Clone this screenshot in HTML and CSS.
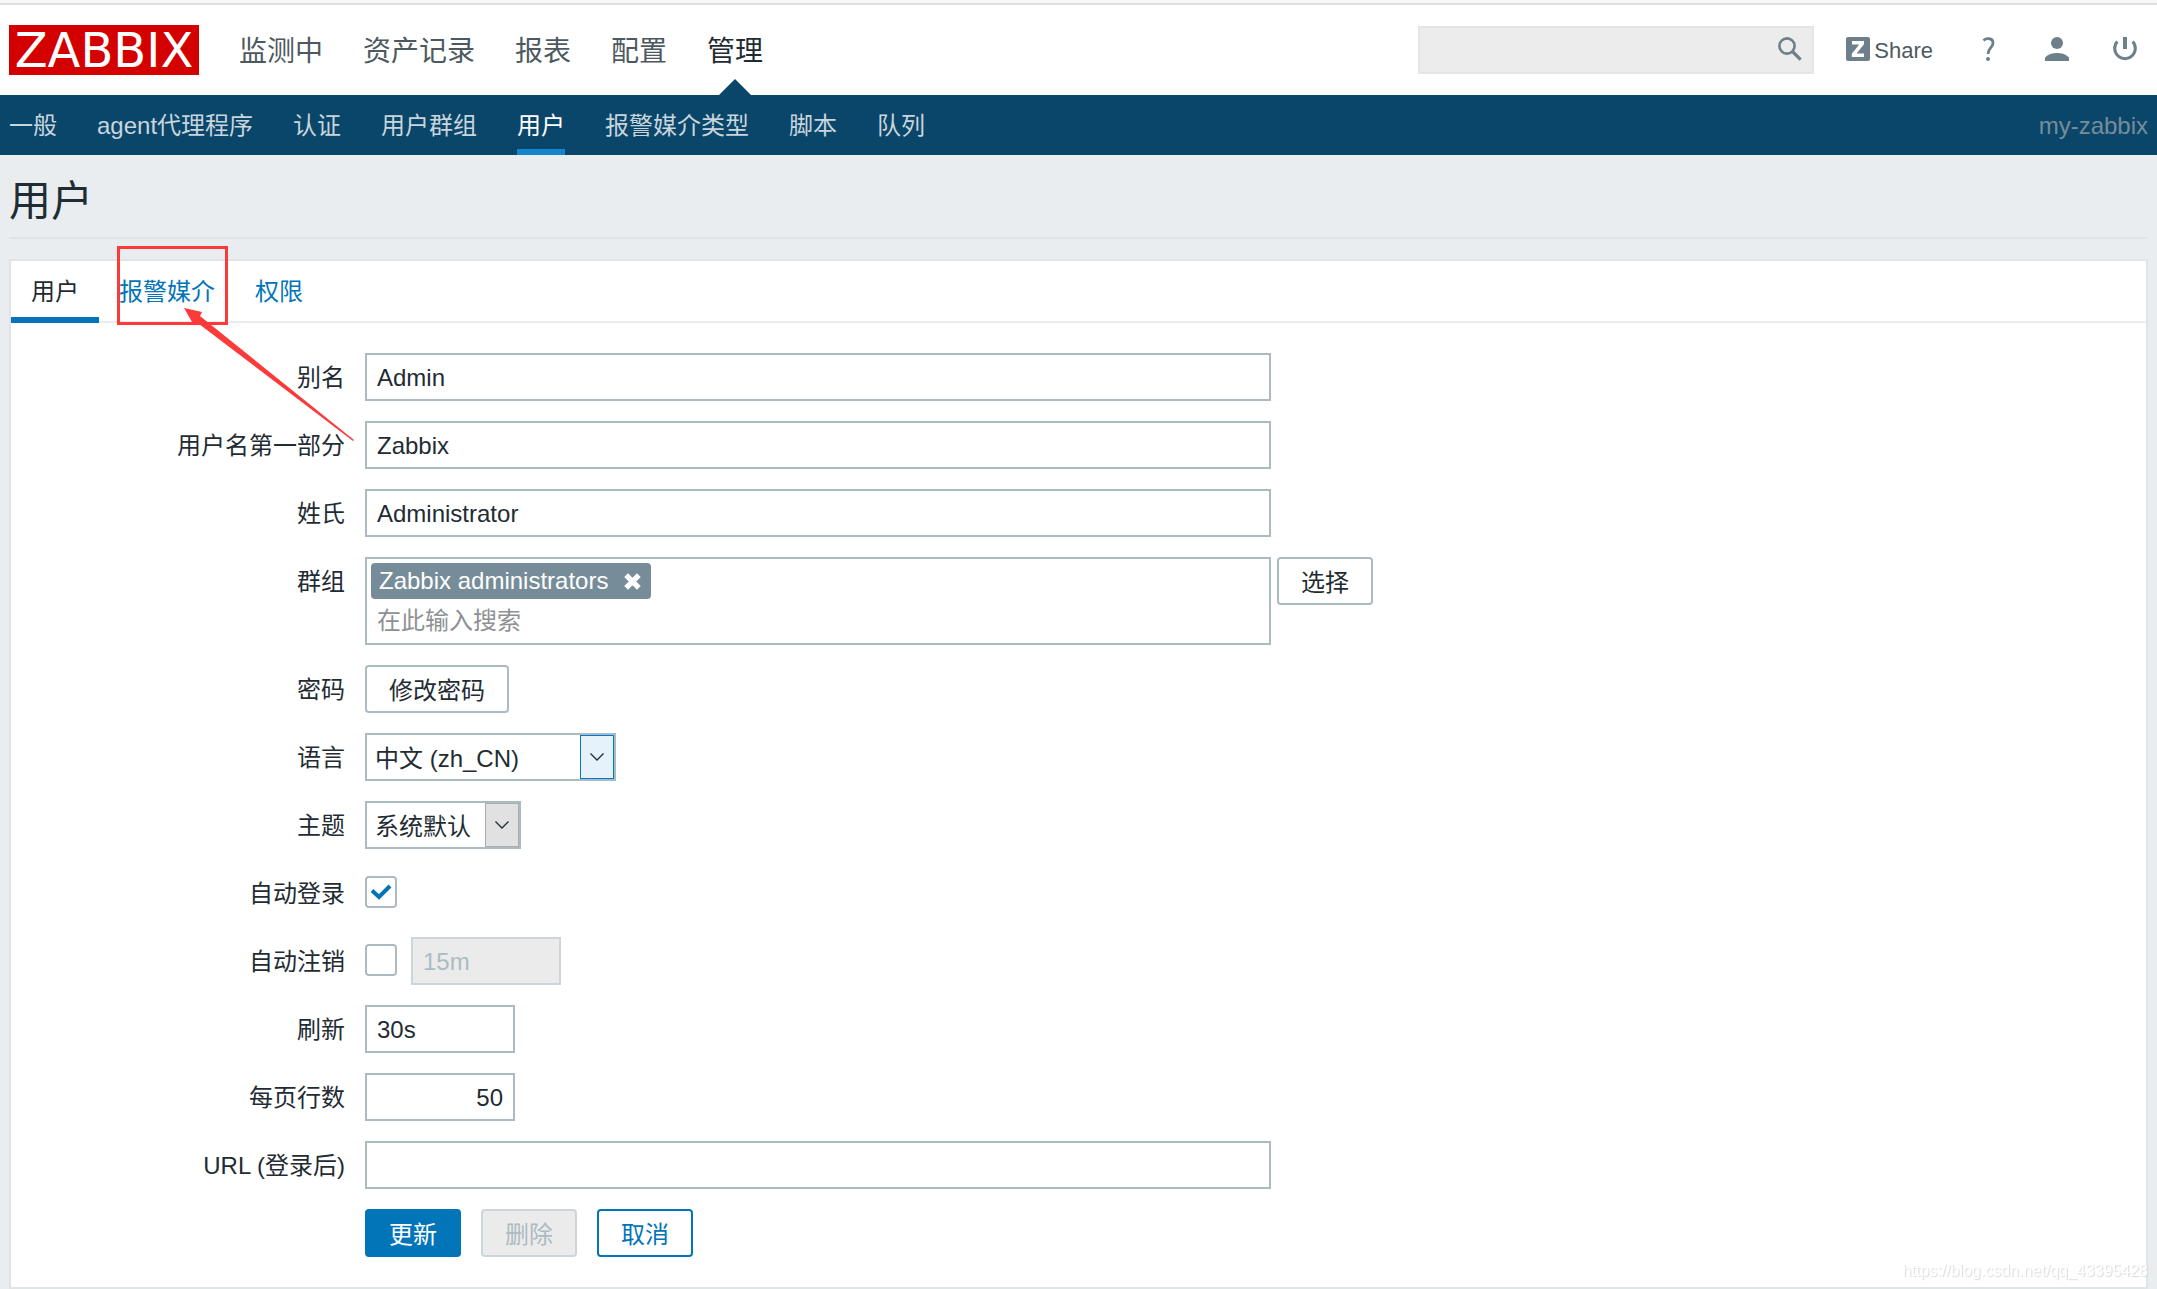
FILE: index.html
```html
<!DOCTYPE html>
<html lang="zh-CN">
<head>
<meta charset="utf-8">
<meta name="viewport" content="width=device-width, initial-scale=1">
<title>用户</title>
<link rel="stylesheet" href="styles.css">
</head>
<body>
<header class="header">
  <a class="logo" href="#">ZABBIX</a>
  <nav class="main-nav" aria-label="主菜单">
    <a href="#">监测中</a>
    <a href="#">资产记录</a>
    <a href="#">报表</a>
    <a href="#">配置</a>
    <a class="current" href="#">管理</a>
  </nav>
  <form class="search" role="search">
    <input class="search-input" type="text" aria-label="搜索">
    <button class="search-button" type="button" aria-label="搜索">
      <svg class="icon" viewBox="0 0 24 24" aria-hidden="true"><circle cx="9" cy="9" r="7.6" fill="none" stroke="currentColor" stroke-width="2.6"/><path d="M14.5 14.5 22.6 22.6" stroke="currentColor" stroke-width="3.2"/></svg>
    </button>
  </form>
  <div class="tools">
    <a class="share" href="#">
      <svg class="icon" viewBox="0 0 24 24" aria-hidden="true"><rect width="24" height="24" rx="2" fill="currentColor"/><path d="M6 4h12v3.2L10.600 16.500H18V20H5.800v-3.200L13.200 7.500H6z" fill="#fff"/></svg>
      <span>Share</span>
    </a>
    <a class="tool" href="#" aria-label="帮助"><svg class="icon" viewBox="0 0 24 24" aria-hidden="true"><path d="M6.500 3.500C8.500 1.400 16 .1 16 6c0 4.500-5 5-5 11" fill="none" stroke="currentColor" stroke-width="2.800"/><circle cx="11" cy="22" r="2" fill="currentColor"/></svg></a>
    <a class="tool" href="#" aria-label="用户资料"><svg class="icon" viewBox="0 0 24 24" aria-hidden="true" fill="currentColor"><circle cx="12" cy="6" r="6"/><path d="M0 24v-3.500C3 17.300 7 16 12 16s9 1.300 12 4.500V24z"/></svg></a>
    <a class="tool" href="#" aria-label="退出"><svg class="icon" viewBox="0 0 24 24" aria-hidden="true" fill="none" stroke="currentColor"><path d="M4.300 4.500A10.300 10.300 0 1 0 19.700 4.500" stroke-width="3"/><path d="M12 0v12" stroke-width="4"/></svg></a>
  </div>
</header>
<nav class="sub-nav" aria-label="子菜单">
  <a href="#">一般</a>
  <a href="#">agent代理程序</a>
  <a href="#">认证</a>
  <a href="#">用户群组</a>
  <a class="current" href="#">用户</a>
  <a href="#">报警媒介类型</a>
  <a href="#">脚本</a>
  <a href="#">队列</a>
  <span class="server-name">my-zabbix</span>
</nav>
<main class="content">
  <h1 class="title">用户</h1>
  <section class="card">
    <nav class="tabs" aria-label="标签">
      <a class="current" href="#">用户</a>
      <a class="marked" href="#">报警媒介</a>
      <a href="#">权限</a>
      <svg class="arrow" viewBox="0 0 170 134" aria-hidden="true"><path d="M0 0 18 4 16 8 170 132 169 133 15 16 8 14z" fill="#fc3a3a"/></svg>
    </nav>
    <form class="form">
      <label for="alias">别名</label>
      <div class="field"><input class="text wide" id="alias" type="text" value="Admin"></div>
      <label for="name">用户名第一部分</label>
      <div class="field"><input class="text wide" id="name" type="text" value="Zabbix"></div>
      <label for="surname">姓氏</label>
      <div class="field"><input class="text wide" id="surname" type="text" value="Administrator"></div>
      <label for="groups">群组</label>
      <div class="field close">
        <div class="multiselect wide">
          <span class="tag">Zabbix administrators
            <button class="tag-remove" type="button" aria-label="移除"><svg viewBox="0 0 16 16" aria-hidden="true"><path d="M2 2 14 14M14 2 2 14" stroke="currentColor" stroke-width="5"/></svg></button>
          </span>
          <input class="multiselect-input" id="groups" type="text" placeholder="在此输入搜索">
        </div>
        <button class="button" type="button">选择</button>
      </div>
      <label for="password">密码</label>
      <div class="field"><button class="button" id="password" type="button">修改密码</button></div>
      <label for="lang">语言</label>
      <div class="field">
        <span class="select language">
          <select id="lang"><option>中文 (zh_CN)</option></select>
          <span class="select-arrow"><svg viewBox="0 0 14 8" aria-hidden="true"><path d="M.5.5 7 7 13.500.5" fill="none" stroke="currentColor" stroke-width="1.300"/></svg></span>
        </span>
      </div>
      <label for="theme">主题</label>
      <div class="field">
        <span class="select theme">
          <select id="theme"><option>系统默认</option></select>
          <span class="select-arrow"><svg viewBox="0 0 14 8" aria-hidden="true"><path d="M.5.5 7 7 13.500.5" fill="none" stroke="currentColor" stroke-width="1.300"/></svg></span>
        </span>
      </div>
      <label for="autologin">自动登录</label>
      <div class="field">
        <span class="check"><input id="autologin" type="checkbox" checked><svg viewBox="0 0 22 16" aria-hidden="true"><path d="M2 6.500 9 13 20 2" fill="none" stroke="currentColor" stroke-width="4"/></svg></span>
      </div>
      <label for="autologout">自动注销</label>
      <div class="field">
        <span class="check"><input id="autologout" type="checkbox"></span>
        <input class="text short" type="text" value="15m" aria-label="自动注销时间" disabled>
      </div>
      <label for="refresh">刷新</label>
      <div class="field"><input class="text short" id="refresh" type="text" value="30s"></div>
      <label for="rows">每页行数</label>
      <div class="field"><input class="text short number" id="rows" type="text" value="50"></div>
      <label for="url">URL (登录后)</label>
      <div class="field"><input class="text wide" id="url" type="text"></div>
      <div class="field actions">
        <button class="button primary" type="button">更新</button>
        <button class="button" type="button" disabled>删除</button>
        <button class="button outline" type="button">取消</button>
      </div>
    </form>
  </section>
</main>
<div class="watermark">https://blog.csdn.net/qq_43395428</div>
</body>
</html>
```
FILE: styles.css
```css
*, *::before, *::after {
  box-sizing: border-box;
}

body {
  margin: 0;
  background: #e9edf0;
  color: #1f2c33;
  font-family: "Liberation Sans", "Noto Sans CJK SC", sans-serif;
  font-size: 24px;
  line-height: 36px;
}

a {
  text-decoration: none;
  white-space: nowrap;
}

input, select, button {
  margin: 0;
  font: inherit;
  color: inherit;
}

.header {
  display: flex;
  align-items: center;
  height: 95px;
  padding: 5px 20px 0 9px;
  background: linear-gradient(#f7f7f7 3px, #dedede 3px, #dedede 5px, #fff 5px);
}

.logo {
  width: 190px;
  height: 50px;
  background: #d40000;
  color: #fff;
  font-family: "DejaVu Sans", sans-serif;
  font-size: 48px;
  line-height: 50px;
  text-align: center;
}

.main-nav {
  display: flex;
  gap: 40px;
  margin: 0 auto 0 40px;
  font-size: 28px;
}

.main-nav a {
  position: relative;
  height: 90px;
  color: #4d5961;
  line-height: 94px;
}

.main-nav .current {
  color: #1f2c33;
}

.main-nav .current::after {
  content: "";
  position: absolute;
  bottom: 0;
  left: 50%;
  margin-left: -16px;
  border: solid transparent;
  border-width: 0 16px 16px;
  border-bottom-color: #0a466a;
}

.search {
  display: flex;
  width: 396px;
  height: 48px;
  border: 2px solid #e5e5e5;
  background: #ececec;
}

.search-input {
  flex: 1;
  min-width: 0;
  padding: 0 10px;
  border: 0;
  background: none;
  outline: 0;
}

.search-button {
  padding: 9px 10px 11px;
  border: 0;
  background: none;
  color: #6c7f8a;
}

.icon {
  display: block;
  width: 24px;
  height: 24px;
}

.tools {
  display: flex;
  align-items: center;
  gap: 44px;
  margin-left: 32px;
}

.tools a {
  color: #6c7f8a;
}

.tool {
  padding-bottom: 2px;
}

.share {
  display: flex;
  gap: 4px;
  height: 26px;
  font-size: 22px;
  line-height: 28px;
}

.share span {
  color: #4d5961;
}

.sub-nav {
  display: flex;
  gap: 40px;
  height: 60px;
  padding: 0 9px;
  background: #0a466a;
  line-height: 62px;
}

.sub-nav a {
  color: #c8d5dd;
}

.sub-nav .current {
  border-bottom: 6px solid #1285cc;
  color: #fff;
}

.server-name {
  margin-left: auto;
  color: #768d99;
}

.content {
  padding: 0 9px;
}

.title {
  margin: 0 0 20px;
  padding: 22px 0 10px;
  border-bottom: 2px solid #dfe4e7;
  font-size: 42px;
  font-weight: 400;
  line-height: 50px;
}

.card {
  border: 2px solid #dfe4e7;
  background: #fff;
}

.tabs {
  position: relative;
  display: flex;
  height: 62px;
  border-bottom: 2px solid #e9edf0;
  line-height: 62px;
}

.tabs a {
  position: relative;
  padding: 0 20px;
  color: #0275b8;
}

.tabs .current {
  height: 62px;
  border-bottom: 6px solid #0275b8;
  color: #1f2c33;
}

.marked::after {
  content: "";
  position: absolute;
  top: -15px;
  right: 7px;
  bottom: -4px;
  left: 18px;
  border: 3px solid #fc3a3a;
}

.arrow {
  position: absolute;
  top: 47px;
  left: 173px;
  width: 170px;
  height: 134px;
  pointer-events: none;
}

.form {
  display: grid;
  grid-template-columns: 334px minmax(0, 1fr);
  gap: 20px;
  padding: 30px 0;
}

.form label {
  height: 48px;
  line-height: 50px;
  text-align: right;
}

.field {
  display: flex;
  align-items: center;
  gap: 14px;
  min-height: 48px;
}

.close {
  align-items: flex-start;
  gap: 6px;
}

.actions {
  grid-column: 2;
  gap: 20px;
}

.text {
  height: 48px;
  padding: 2px 10px 0;
  border: 2px solid #acbbc2;
  background: #fff;
}

.wide {
  width: 100%;
  max-width: 906px;
}

.short {
  width: 150px;
}

.number {
  text-align: right;
}

.text:disabled, .button:disabled {
  border-color: #ccd5d9;
  background: #ebebeb;
  color: #acbbc2;
}

.multiselect {
  display: flex;
  flex-direction: column;
  align-items: flex-start;
  height: 88px;
  padding: 4px;
  border: 2px solid #acbbc2;
}

.multiselect-input {
  width: 100%;
  height: 44px;
  padding: 4px 6px 0;
  border: 0;
  background: none;
  outline: 0;
}

.multiselect-input::placeholder {
  color: #8e9193;
  opacity: 1;
}

.tag {
  display: flex;
  align-items: center;
  gap: 16px;
  height: 36px;
  padding: 0 10px 0 8px;
  border-radius: 4px;
  background: #768d99;
  color: #fff;
  line-height: 38px;
  white-space: nowrap;
}

.tag-remove {
  display: flex;
  padding: 0;
  border: 0;
  background: none;
}

.tag-remove svg {
  width: 17px;
  height: 17px;
}

.button {
  height: 48px;
  padding: 4px 22px 0;
  border: 2px solid #acbbc2;
  border-radius: 4px;
  background: #fff;
  line-height: 40px;
  white-space: nowrap;
}

.primary {
  border-color: #0275b8;
  background: #0275b8;
  color: #fff;
}

.outline {
  border-color: #0275b8;
  color: #0275b8;
}

.select {
  display: flex;
  height: 48px;
  border: 2px solid #acbbc2;
}

.language {
  width: 251px;
}

.theme {
  width: 156px;
}

.select select {
  flex: 1;
  min-width: 0;
  padding: 4px 0 0 8px;
  border: 0;
  background: none;
  appearance: none;
  outline: 0;
}

.select-arrow {
  display: flex;
  align-items: center;
  justify-content: center;
  width: 34px;
  border: 1px solid #adadad;
  background: #e1e1e1;
}

.language .select-arrow {
  border-color: #0078d7;
  background: #e5f1fb;
}

.select-arrow svg {
  width: 14px;
  height: 8px;
}

.check {
  display: grid;
  place-items: center;
  padding-bottom: 2px;
  color: #0275b8;
}

.check input {
  grid-area: 1 / 1;
  width: 32px;
  height: 32px;
  border: 2px solid #acbbc2;
  border-radius: 4px;
  background: #fff;
  appearance: none;
}

.check svg {
  grid-area: 1 / 1;
  width: 22px;
  height: 16px;
  pointer-events: none;
}

.watermark {
  position: fixed;
  right: 9px;
  bottom: 6px;
  color: #fff;
  font-size: 16px;
  line-height: 24px;
  text-shadow: 1px 1px 1px #d8d8d8;
}
```
